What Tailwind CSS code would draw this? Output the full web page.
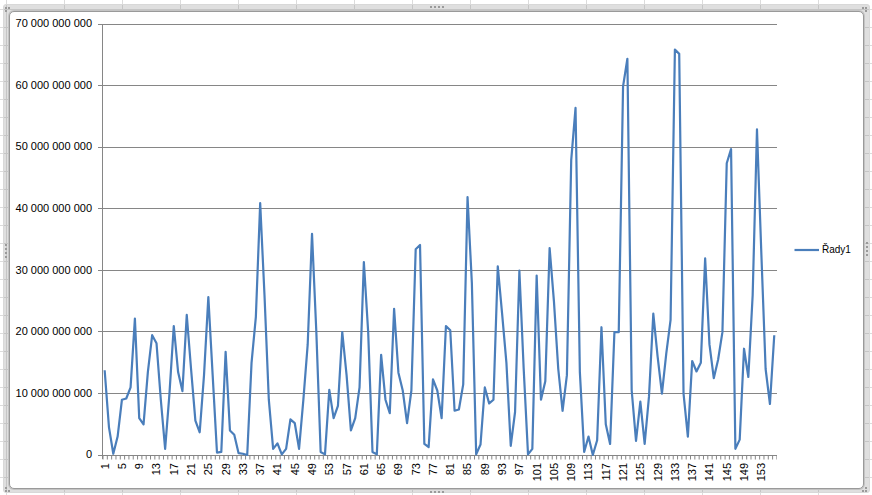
<!DOCTYPE html>
<html>
<head>
<meta charset="utf-8">
<script src="https://cdn.jsdelivr.net/npm/@tailwindcss/browser@4"></script>
</head>
<body class="m-0 bg-white">
<div class="w-[872px] h-[495px] overflow-hidden bg-white bg-[linear-gradient(to_right,#dcdcdc_1px,transparent_1px),linear-gradient(to_bottom,#dcdcdc_1px,transparent_1px)] bg-[size:58px_18px] bg-[position:6px_9px] pt-[4px] pl-[3px] font-['Liberation_Sans',sans-serif]">
  <div class="w-[867px] h-[489px] rounded-[3px] bg-[#808080]/25 border border-[#d8d8d8] pl-[5px] pt-[6px]">
    <div class="w-[855px] h-[478px] rounded-[5px] bg-white border border-[#9a9a9a] shadow-[0_0_0_1px_#c4c4c4]">
      <svg class="block ml-[-10px] mt-[-12px]" width="872" height="495" viewBox="0 0 872 495" xmlns="http://www.w3.org/2000/svg">
        <g stroke="#868686" stroke-width="1" fill="none" shape-rendering="crispEdges">
          <path d="M98 24.5H776.5M98 85.5H776.5M98 147.5H776.5M98 208.5H776.5M98 270.5H776.5M98 331.5H776.5M98 393.5H776.5M98 455.5H776.5M102.5 24V459"/>
        </g>
        <path d="M102.5 457.5H777" stroke="#868686" stroke-width="4" stroke-dasharray="1 3.32" fill="none"/>
        <polyline transform="translate(104.66 455) scale(4.32 -6.143)" fill="none" stroke="#4a7ebb" stroke-width="2.2" stroke-linejoin="round" vector-effect="non-scaling-stroke" points="0,13.8 1,4.5 2,0.2 3,3 4,9 5,9.2 6,11 7,22.2 8,6 9,5 10,13.5 11,19.5 12,18.2 13,9 14,1 15,10 16,21 17,13.5 18,10.4 19,22.8 20,14 21,5.6 22,3.7 23,13 24,25.7 25,13 26,0.4 27,0.5 28,16.8 29,4 30,3.3 31,0.3 32,0.2 33,0 34,15 35,22.5 36,41 37,26 38,9 39,1 40,1.9 41,0.1 42,1 43,5.8 44,5.2 45,1 46,9 47,18 48,36 49,20 50,0.5 51,0.1 52,10.6 53,6 54,8 55,20 56,13 57,4 58,6 59,11 60,31.4 61,20 62,0.5 63,0.1 64,16.3 65,9 66,6.8 67,23.8 68,13.4 69,10.5 70,5.2 71,10.5 72,33.5 73,34.2 74,1.8 75,1.3 76,12.3 77,10.5 78,6 79,21 80,20.3 81,7.2 82,7.4 83,11.5 84,42 85,28 86,0.1 87,1.7 88,11 89,8.4 90,9 91,30.7 92,23 93,15 94,1.5 95,7 96,30 97,14 98,0.1 99,1 100,29.2 101,9 102,12 103,33.7 104,25 105,14 106,7.2 107,13 108,48 109,56.5 110,13.5 111,0.5 112,3 113,0 114,2.4 115,20.8 116,5 117,1.8 118,20 119,20 120,60 121,64.5 122,10.5 123,2.3 124,8.7 125,1.8 126,9.5 127,23 128,16 129,10 130,16.5 131,22 132,66 133,65.3 134,10 135,3 136,15.3 137,13.6 138,15 139,32 140,18 141,12.5 142,15.5 143,20 144,47.5 145,49.8 146,1 147,2.5 148,17.3 149,12.7 150,26 151,53 152,33 153,14 154,8.3 155,19.5"/>
        <g font-family="Liberation Sans, sans-serif" font-size="11" fill="#000" text-anchor="end">
          <text x="92" y="27">70 000 000 000</text>
          <text x="92" y="89">60 000 000 000</text>
          <text x="92" y="150">50 000 000 000</text>
          <text x="92" y="212">40 000 000 000</text>
          <text x="92" y="274">30 000 000 000</text>
          <text x="92" y="335">20 000 000 000</text>
          <text x="92" y="397">10 000 000 000</text>
          <text x="92" y="458">0</text>
        </g>
        <g font-family="Liberation Sans, sans-serif" font-size="11" fill="#000" text-anchor="end">
          <text transform="translate(108.5 463) rotate(-90)">1</text>
          <text transform="translate(125.8 463) rotate(-90)">5</text>
          <text transform="translate(143.1 463) rotate(-90)">9</text>
          <text transform="translate(160.3 463) rotate(-90)">13</text>
          <text transform="translate(177.6 463) rotate(-90)">17</text>
          <text transform="translate(194.9 463) rotate(-90)">21</text>
          <text transform="translate(212.2 463) rotate(-90)">25</text>
          <text transform="translate(229.5 463) rotate(-90)">29</text>
          <text transform="translate(246.8 463) rotate(-90)">33</text>
          <text transform="translate(264 463) rotate(-90)">37</text>
          <text transform="translate(281.3 463) rotate(-90)">41</text>
          <text transform="translate(298.6 463) rotate(-90)">45</text>
          <text transform="translate(315.9 463) rotate(-90)">49</text>
          <text transform="translate(333.2 463) rotate(-90)">53</text>
          <text transform="translate(350.5 463) rotate(-90)">57</text>
          <text transform="translate(367.7 463) rotate(-90)">61</text>
          <text transform="translate(385 463) rotate(-90)">65</text>
          <text transform="translate(402.3 463) rotate(-90)">69</text>
          <text transform="translate(419.6 463) rotate(-90)">73</text>
          <text transform="translate(436.9 463) rotate(-90)">77</text>
          <text transform="translate(454.2 463) rotate(-90)">81</text>
          <text transform="translate(471.4 463) rotate(-90)">85</text>
          <text transform="translate(488.7 463) rotate(-90)">89</text>
          <text transform="translate(506 463) rotate(-90)">93</text>
          <text transform="translate(523.3 463) rotate(-90)">97</text>
          <text transform="translate(540.6 463) rotate(-90)">101</text>
          <text transform="translate(557.9 463) rotate(-90)">105</text>
          <text transform="translate(575.1 463) rotate(-90)">109</text>
          <text transform="translate(592.4 463) rotate(-90)">113</text>
          <text transform="translate(609.7 463) rotate(-90)">117</text>
          <text transform="translate(627 463) rotate(-90)">121</text>
          <text transform="translate(644.3 463) rotate(-90)">125</text>
          <text transform="translate(661.6 463) rotate(-90)">129</text>
          <text transform="translate(678.8 463) rotate(-90)">133</text>
          <text transform="translate(696.1 463) rotate(-90)">137</text>
          <text transform="translate(713.4 463) rotate(-90)">141</text>
          <text transform="translate(730.7 463) rotate(-90)">145</text>
          <text transform="translate(748 463) rotate(-90)">149</text>
          <text transform="translate(765.3 463) rotate(-90)">153</text>
        </g>
        <line x1="794.5" y1="250" x2="819" y2="250" stroke="#4a7ebb" stroke-width="2.2"/>
        <text x="822" y="253" font-family="Liberation Sans, sans-serif" font-size="10" fill="#000">Řady1</text>
        <g fill="#9a9a9a" shape-rendering="crispEdges">
          <path d="M430 6h2v2h-2zM434 6h2v2h-2zM438 6h2v2h-2zM442 6h2v2h-2z"/>
          <path d="M430 491h2v2h-2zM434 491h2v2h-2zM438 491h2v2h-2zM442 491h2v2h-2z"/>
          <path d="M5 244h2v2h-2zM5 248h2v2h-2zM5 252h2v2h-2zM5 256h2v2h-2z"/>
          <path d="M866 242h2v2h-2zM866 246h2v2h-2zM866 250h2v2h-2zM866 254h2v2h-2z"/>
          <path d="M5 7h2v2h-2zM8 7h2v2h-2zM5 10h2v2h-2z"/>
          <path d="M862 7h2v2h-2zM865 7h2v2h-2zM865 10h2v2h-2z"/>
          <path d="M5 487h2v2h-2zM5 490h2v2h-2zM8 490h2v2h-2z"/>
          <path d="M865 487h2v2h-2zM862 490h2v2h-2zM865 490h2v2h-2z"/>
        </g>
      </svg>
    </div>
  </div>
</div>
</body>
</html>
